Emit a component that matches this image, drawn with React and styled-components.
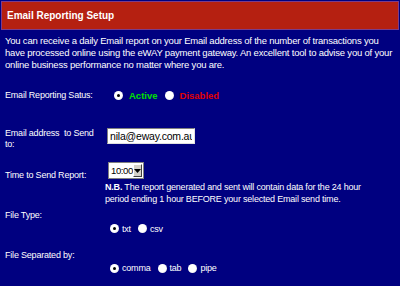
import React from "react";
import styled, { createGlobalStyle } from "styled-components";

const GlobalStyle = createGlobalStyle`
  html, body {
    margin: 0;
    padding: 0;
    background: #000080;
  }
  body {
    font-family: "Liberation Sans", Arial, sans-serif;
    font-size: 9px;
    letter-spacing: -0.2px;
    color: #ffffff;
  }
`;

const App = () => {
  return (
    <>
      <GlobalStyle />
      <Page>
        <Header>Email Reporting Setup</Header>
        <Intro>
          You can receive a daily Email report on your Email address of the number of transactions you
          <br />
          have processed online using the eWAY payment gateway. An excellent tool to advise you of your
          <br />
          online business performance no matter where you are.
        </Intro>

        <Row $top={19}>
          <Label>Email Reporting Satus:</Label>
          <Options>
            <Choice>
              <Radio $checked />
              <Status $color="#00e000">Active</Status>
            </Choice>
            <Choice>
              <Radio />
              <Status $color="#e00000">Disabled</Status>
            </Choice>
          </Options>
        </Row>

        <Row $top={27}>
          <Label>
            Email address&nbsp; to Send
            <br />
            to:
          </Label>
          <TextInput value="nila@eway.com.au" readOnly />
        </Row>

        <Row $top={21}>
          <Label>Time to Send Report:</Label>
          <Stack>
            <Select>
              <span>10:00</span>
              <Arrow>
                <svg width="7" height="4" viewBox="0 0 7 4">
                  <path d="M0 0h7L3.5 4z" fill="#000" />
                </svg>
              </Arrow>
            </Select>
            <Note>
              <b>N.B.</b> The report generated and sent will contain data for the 24 hour
              <br />
              period ending 1 hour BEFORE your selected Email send time.
            </Note>
          </Stack>
        </Row>

        <Block $top={5}>
          <Label>File Type:</Label>
          <Options $indent>
            <Choice>
              <Radio $checked />
              txt
            </Choice>
            <Choice>
              <Radio />
              csv
            </Choice>
          </Options>
        </Block>

        <Block $top={16}>
          <Label>File Separated by:</Label>
          <Options $indent>
            <Choice>
              <Radio $checked />
              comma
            </Choice>
            <Choice>
              <Radio />
              tab
            </Choice>
            <Choice>
              <Radio />
              pipe
            </Choice>
          </Options>
        </Block>
      </Page>
    </>
  );
};

const Page = styled.div`
  width: 400px;
  height: 286px;
  overflow: hidden;
  background: #000080;
`;

const Header = styled.div`
  margin: 1px 1px 0;
  height: 27px;
  display: flex;
  align-items: center;
  padding-left: 5px;
  background: #b52011;
  border: 1px solid #7a3c8c;
  font-weight: bold;
  font-size: 10px;
  letter-spacing: 0;
`;

const Intro = styled.p`
  margin: 5px 0 0;
  padding-left: 5px;
  font-size: 9.5px;
  line-height: 12px;
  white-space: nowrap;
`;

const Row = styled.div`
  display: grid;
  grid-template-columns: 102px 1fr;
  align-items: start;
  margin-top: ${(p) => p.$top}px;
  padding-left: 5px;
`;

const Block = styled.div`
  margin-top: ${(p) => p.$top}px;
  padding-left: 5px;
`;

const Label = styled.div`
  line-height: 10.5px;
  white-space: nowrap;
`;

const Options = styled.div`
  display: flex;
  align-items: center;
  gap: 7px;
  margin-left: ${(p) => (p.$indent ? "105px" : "7px")};
  margin-top: ${(p) => (p.$indent ? "3px" : "0")};
`;

const Choice = styled.span`
  display: inline-flex;
  align-items: center;
  gap: 1px;
`;

const Radio = styled.span`
  width: 9px;
  height: 9px;
  border-radius: 50%;
  background: radial-gradient(circle at 40% 40%, #ffffff 55%, #d8d8d8 100%);
  display: inline-flex;
  align-items: center;
  justify-content: center;
  margin-right: 2px;
  &::after {
    content: "";
    width: 3px;
    height: 3px;
    border-radius: 50%;
    background: ${(p) => (p.$checked ? "#000" : "transparent")};
  }
`;

const Status = styled.span`
  color: ${(p) => p.$color};
  font-weight: bold;
  font-size: 9.5px;
  letter-spacing: 0;
  margin-left: 3px;
`;

const TextInput = styled.input`
  width: 88px;
  height: 16px;
  box-sizing: border-box;
  margin: 0;
  padding: 1px 2px;
  border: 1px solid #808080;
  border-right-color: #e0e0e0;
  border-bottom-color: #e0e0e0;
  background: #fff;
  font-family: "Liberation Sans", Arial, sans-serif;
  font-size: 10.5px;
  letter-spacing: -0.2px;
  color: #000;
  outline: none;
`;

const Stack = styled.div`
  display: flex;
  flex-direction: column;
  margin-top: -8px;
`;

const Select = styled.div`
  width: 36px;
  height: 17px;
  box-sizing: border-box;
  display: flex;
  align-items: center;
  justify-content: space-between;
  margin-left: 1px;
  padding: 1px 1px 1px 2px;
  background: #fff;
  border: 1px solid #808080;
  font-size: 9.5px;
  letter-spacing: -0.4px;
  color: #000;
`;

const Arrow = styled.span`
  width: 10px;
  height: 13px;
  box-sizing: border-box;
  display: flex;
  align-items: center;
  justify-content: center;
  background: #d4d0c8;
  border: 1px solid;
  border-color: #fff #404040 #404040 #fff;
`;

const Note = styled.div`
  margin-top: 2px;
  margin-left: -2px;
  line-height: 12px;
  white-space: nowrap;
`;

export default App;
